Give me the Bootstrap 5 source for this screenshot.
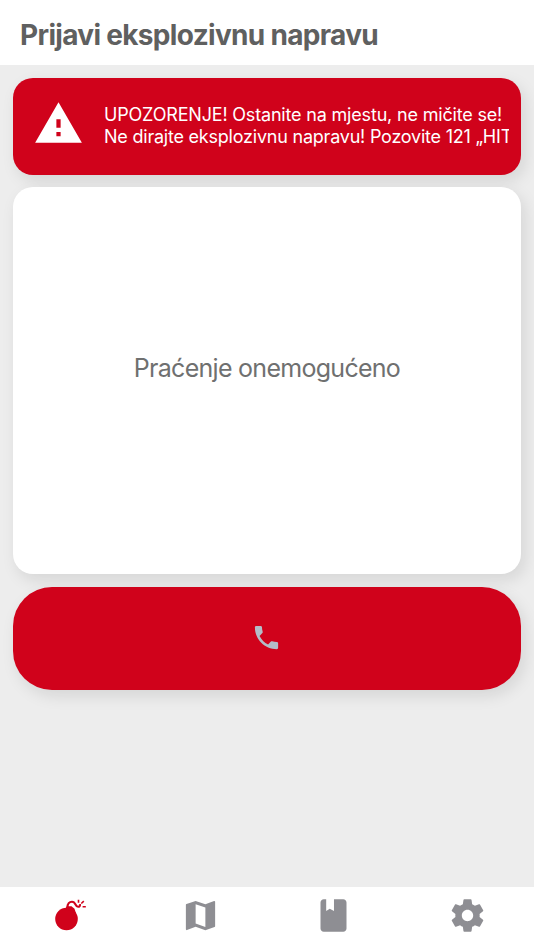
<!DOCTYPE html>
<html lang="hr">
<head>
<meta charset="utf-8">
<meta name="viewport" content="width=device-width, initial-scale=1">
<title>Prijavi eksplozivnu napravu</title>
<link href="https://cdn.jsdelivr.net/npm/bootstrap@5.3.0/dist/css/bootstrap.min.css" rel="stylesheet">
<style>
body { font-family: Inter, "Liberation Sans", sans-serif; background: #ededed; --brand: #d0021b; }
.app-header { height: 65px; padding: 4px 20px 0; }
.app-header h1 { font-size: 28px; font-weight: 700; color: #5f6060; letter-spacing: -.68px; line-height: 1; white-space: nowrap; }
.app-main { padding: 13px 13px 0; gap: 13px; }
.panel { border-radius: 20px; box-shadow: 4px 6px 16px rgba(0,0,0,.1); }
.warning { height: 96.5px; background: var(--brand); padding: 0 12px 0 20px; }
.warning svg { margin-top: -6px; }
.warning p { font-size: 18px; line-height: 22px; margin-left: 20px; white-space: nowrap; }
.line-first { letter-spacing: -.18px; }
.line-second { letter-spacing: -.22px; }
.tracking { height: 386.5px; font-size: 25px; color: #6f7070; letter-spacing: -.72px; margin-top: -.5px; padding-bottom: 23px; }
.call-btn { height: 103.5px; background: var(--brand); border-radius: 39px; color: #b3bdc8; }
.call-btn svg { margin: -2px 2px 0 0; }
.tabs { height: 63.5px; padding-bottom: 5px; color: #8e8e93; }
.tabs a { color: inherit; }
.tabs a.active { color: var(--brand); }
</style>
</head>
<body class="vh-100 d-flex flex-column overflow-hidden">
<header class="app-header bg-white d-flex align-items-center">
  <h1 class="m-0">Prijavi eksplozivnu napravu</h1>
</header>
<main class="app-main flex-grow-1 d-flex flex-column">
  <section class="panel warning text-white d-flex align-items-center" role="alert">
    <svg class="flex-shrink-0" width="51" height="51" viewBox="0 0 24 24" fill="currentColor"><path d="M1 21h22L12 2 1 21zm12-3h-2v-2h2v2zm0-4h-2v-4h2v4z"/></svg>
    <p class="mb-0 flex-grow-1 overflow-hidden"><span class="line-first">UPOZORENJE! Ostanite na mjestu, ne mičite se!</span><br><span class="line-second">Ne dirajte eksplozivnu napravu! Pozovite 121 „HIT</span></p>
  </section>
  <section class="panel tracking bg-white d-flex align-items-center justify-content-center"><span>Praćenje onemogućeno</span></section>
  <button class="panel call-btn border-0 d-flex align-items-center justify-content-center" type="button" aria-label="Pozovi">
    <svg width="31" height="31" viewBox="0 0 24 24" fill="currentColor"><path d="M20 15.500c-1.250 0-2.450-.2-3.570-.57-.35-.11-.74-.03-1.020.24l-2.200 2.200c-2.830-1.440-5.150-3.750-6.590-6.590l2.200-2.210c.28-.26.36-.65.25-1C8.700 6.450 8.500 5.250 8.500 4c0-.55-.45-1-1-1H4c-.55 0-1 .45-1 1 0 9.390 7.610 17 17 17 .55 0 1-.45 1-1v-3.500c0-.55-.45-1-1-1z"/></svg>
  </button>
</main>
<nav class="tabs bg-white row g-0 row-cols-4 align-items-center text-center">
  <a class="col d-flex justify-content-center active" href="#" aria-label="Prijava">
    <svg width="39" height="39" viewBox="0 0 39 39" fill="currentColor"><circle cx="19.500" cy="23" r="11.300"/><path d="M18.500 12.500l1-2.300h5l3 2.500 1.500 4.500z"/><path d="M20.600 11.500C20.200 7.500 22.500 5.700 25 5.700C29 5.700 28 10.800 31 10.800C32.600 10.800 33.200 9.700 33 8.200" fill="none" stroke="currentColor" stroke-width="2.100"/><path d="M31.500 6.700V3.800M34.300 7.500l2.500-2.300M35.600 10.800h3.200" fill="none" stroke="currentColor" stroke-width="1.600"/></svg>
  </a>
  <a class="col d-flex justify-content-center" href="#" aria-label="Karta">
    <svg width="39" height="39" viewBox="0 0 24 24" fill="currentColor"><path d="M20.500 3l-.16.03L15 5.100 9 3 3.360 4.900c-.21.07-.36.25-.36.48V20.500c0 .28.22.5.5.5l.16-.03L9 18.900l6 2.100 5.640-1.900c.21-.07.36-.25.36-.48V3.500c0-.28-.22-.5-.5-.5zM15 19l-6-2.110V5l6 2.110V19z"/></svg>
  </a>
  <a class="col d-flex justify-content-center" href="#" aria-label="Priručnik">
    <svg width="39" height="39" viewBox="0 0 24 24" fill="currentColor"><path d="M18 2h-5.700v7.200L9.700 7.900 7.500 9.200V2H6c-1.100 0-2 .9-2 2v16c0 1.100.9 2 2 2h12c1.100 0 2-.9 2-2V4c0-1.100-.9-2-2-2z"/></svg>
  </a>
  <a class="col d-flex justify-content-center" href="#" aria-label="Postavke">
    <svg width="39" height="39" viewBox="0 0 24 24" fill="currentColor"><path d="M19.430 12.980c.04-.32.07-.64.07-.98s-.03-.66-.07-.98l2.110-1.650c.19-.15.24-.42.12-.64l-2-3.460c-.12-.22-.39-.3-.61-.22l-2.490 1c-.52-.4-1.080-.73-1.690-.98l-.38-2.650C14.460 2.180 14.250 2 14 2h-4c-.25 0-.46.18-.49.42l-.38 2.650c-.61.25-1.170.59-1.690.98l-2.490-1c-.23-.09-.49 0-.61.22l-2 3.460c-.13.22-.07.49.12.64l2.110 1.650c-.04.32-.07.65-.07.98s.03.66.07.98l-2.110 1.650c-.19.15-.24.42-.12.64l2 3.460c.12.22.39.3.61.22l2.490-1c.52.4 1.080.73 1.690.98l.38 2.650c.03.24.24.42.49.42h4c.25 0 .46-.18.49-.42l.38-2.650c.61-.25 1.170-.59 1.690-.98l2.490 1c.23.09.49 0 .61-.22l2-3.460c.12-.22.07-.49-.12-.64l-2.110-1.650zM12 15.500c-1.930 0-3.500-1.570-3.500-3.500s1.570-3.500 3.500-3.500 3.500 1.570 3.500 3.500-1.570 3.500-3.500 3.500z"/></svg>
  </a>
</nav>
<script src="https://cdn.jsdelivr.net/npm/bootstrap@5.3.0/dist/js/bootstrap.bundle.min.js"></script>
</body>
</html>
